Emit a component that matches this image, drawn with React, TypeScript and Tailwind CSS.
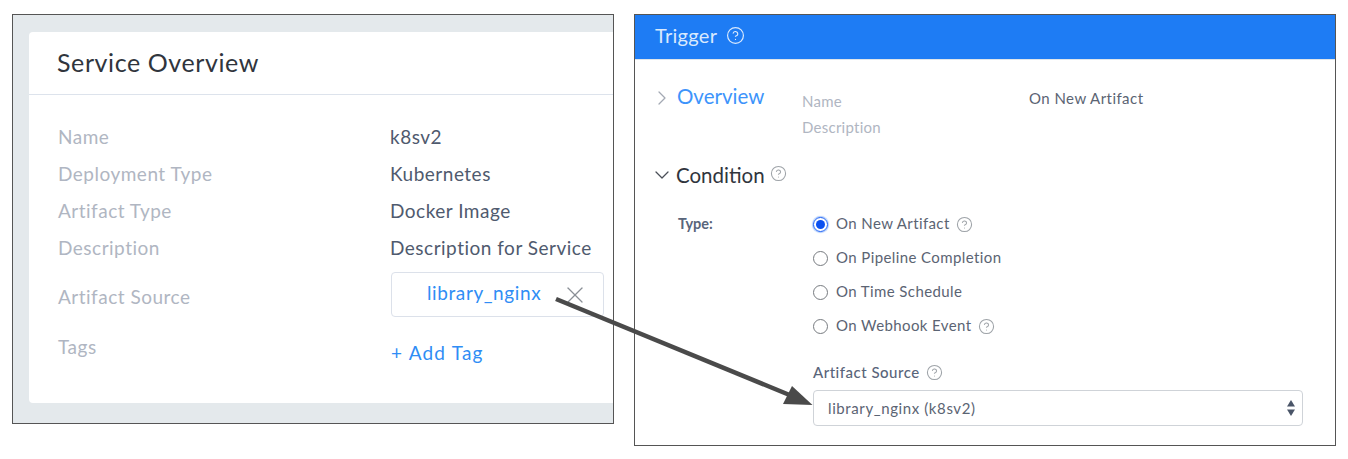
import { ChevronDown, ChevronRight, CircleHelp, X } from 'lucide-react'

const font = "font-['Lato','Noto_Sans',sans-serif]"

const overviewRows = [
  { label: 'Name', value: 'k8sv2' },
  { label: 'Deployment Type', value: 'Kubernetes' },
  { label: 'Artifact Type', value: 'Docker Image' },
  { label: 'Description', value: 'Description for Service' }
]

const triggerTypes = [
  { name: 'On New Artifact', checked: true, help: true },
  { name: 'On Pipeline Completion', checked: false, help: false },
  { name: 'On Time Schedule', checked: false, help: false },
  { name: 'On Webhook Event', checked: false, help: true }
]

function Radio({ checked }: { checked: boolean }) {
  if (checked) {
    return (
      <span className="flex h-[15px] w-[15px] shrink-0 items-center justify-center rounded-full border-[1.5px] border-[#1a5ff5] shadow-[0_0_1px_1px_#a9c8fb]">
        <span className="h-[9px] w-[9px] rounded-full bg-[#0b50f0]" />
      </span>
    )
  }
  return <span className="block h-[15px] w-[15px] shrink-0 rounded-full border-[1.5px] border-[#777b80] bg-white" />
}

function ServiceOverview() {
  return (
    <section className="h-[410px] w-[602px] shrink-0 overflow-hidden border border-[#555] bg-[#e4e9ec] pt-[17px] pl-[16px]">
      <div className="h-[371px] rounded-l-[4px] bg-white">
        {/* Header */}
        <div className="flex h-[63px] items-center border-b border-[#dde3ec] pl-[28px]">
          <h2 className="text-[25px] tracking-[0.6px] text-[#30353d]">Service Overview</h2>
        </div>

        <div className="pt-[24px] pl-[29px] text-[19px] tracking-[0.5px]">
          {overviewRows.map((row) => (
            <div key={row.label} className="flex h-[37px] items-center">
              <span className="w-[332px] text-[#b0b6c2]">{row.label}</span>
              <span className="text-[#4f5a6e]">{row.value}</span>
            </div>
          ))}

          <div className="flex h-[46px] items-center">
            <span className="mt-[15px] w-[333px] text-[#b0b6c2]">Artifact Source</span>
            <div className="mt-[9px] flex h-[45px] w-[213px] items-center rounded-[4px] border border-[#dce1ea] pr-[14px] pl-[35px]">
              <span className="mt-[-2px] flex-1 tracking-[0.6px] text-[#2f8df5]">library_nginx</span>
              <X className="h-[28px] w-[28px] text-[#8a8f96]" strokeWidth={1.1} />
            </div>
          </div>

          <div className="mt-[20px] flex items-start">
            <span className="w-[333px] text-[#b0b6c2]">Tags</span>
            <span className="mt-[6px] tracking-[1.2px] text-[#2f8df5]">+ Add Tag</span>
          </div>
        </div>
      </div>
    </section>
  )
}

function TriggerPanel() {
  return (
    <section className="h-[432px] w-[702px] shrink-0 overflow-hidden border border-[#555] bg-white">
      {/* Header */}
      <div className="flex h-[45px] items-center gap-[9px] border-b border-[#dfe5ea] bg-[#1e7cf4] pb-[4px] pl-[20px]">
        <span className="text-[20px] tracking-[0.3px] text-[#d9e9fd]">Trigger</span>
        <CircleHelp className="h-[19px] w-[19px] text-[#d9e9fd]" strokeWidth={1.5} />
      </div>

      {/* Overview */}
      <div className="flex pt-[23px] pl-[19px]">
        <ChevronRight className="mt-[3px] -ml-[4px] h-[24px] w-[24px] text-[#a3a9b3]" strokeWidth={1.25} />
        <span className="ml-[3px] w-[125px] text-[20.5px] leading-[26px] text-[#3d94fb]">Overview</span>
        <div className="mt-[5px] w-[227px] text-[15px] leading-[26px] tracking-[0.25px] text-[#b0b6c2]">
          <div>Name</div>
          <div>Description</div>
        </div>
        <span className="mt-[4px] text-[15px] leading-[22px] tracking-[0.45px] text-[#5b6473]">On New Artifact</span>
      </div>

      {/* Condition */}
      <div className="mt-[22px] flex items-center pl-[16px]">
        <ChevronDown className="-ml-[1px] h-[24px] w-[24px] text-[#4a4f57]" strokeWidth={1.25} />
        <span className="ml-[2px] text-[20.5px] leading-[26px] text-[#30353d]">Condition</span>
        <CircleHelp className="mt-[-3px] ml-[5px] h-[17px] w-[17px] text-[#9ea3a8]" strokeWidth={1.5} />
      </div>

      <div className="mt-[22px] flex pl-[43px]">
        <span className="mt-[2px] w-[135px] text-[14.5px] leading-[24px] font-bold text-[#59657a]">Type:</span>
        <div>
          {triggerTypes.map((type) => (
            <div key={type.name} className="flex h-[34px] items-start gap-[8px] pt-[3px]">
              <span className="pt-[4px]"><Radio checked={type.checked} /></span>
              <span className="text-[15px] leading-[20px] tracking-[0.4px] text-[#5b6473]">{type.name}</span>
              {type.help && <CircleHelp className="mt-[3px] -ml-[2px] h-[17px] w-[17px] text-[#9ea3a8]" strokeWidth={1.5} />}
            </div>
          ))}
        </div>
      </div>

      <div className="mt-[16px] ml-[178px] w-[490px]">
        <div className="flex items-center gap-[6px]">
          <span className="text-[15px] leading-[20px] font-medium tracking-[0.5px] text-[#59657a]">Artifact Source</span>
          <CircleHelp className="h-[17px] w-[17px] text-[#9ea3a8]" strokeWidth={1.5} />
        </div>
        <div className="mt-[8px] flex h-[36px] items-center justify-between rounded-[4px] border-[1.5px] border-[#cfd3d8] pr-[6px] pl-[14px]">
          <span className="text-[15px] tracking-[0.6px] text-[#5b6473]">library_nginx (k8sv2)</span>
          <svg width="10" height="18" viewBox="0 0 10 18" className="text-[#4a5568]">
            <path d="M5 1 L9 7.5 H1 Z" fill="currentColor" />
            <path d="M5 17 L9 10.5 H1 Z" fill="currentColor" />
          </svg>
        </div>
      </div>
    </section>
  )
}

export default function App() {
  return (
    <div className={`relative h-[459px] w-[1348px] overflow-hidden bg-white ${font}`}>
      <div className="flex items-start gap-[20px] pt-[14px] pl-[12px]">
        <ServiceOverview />
        <TriggerPanel />
      </div>

      {/* Callout arrow */}
      <svg className="absolute top-0 left-0" width="1348" height="459" viewBox="0 0 1348 459">
        <line x1="556" y1="299" x2="792" y2="396" stroke="#4a4a4a" strokeWidth="4.5" />
        <path d="M812.5 405 L783 404 L792 386 Z" fill="#4a4a4a" />
      </svg>
    </div>
  )
}
